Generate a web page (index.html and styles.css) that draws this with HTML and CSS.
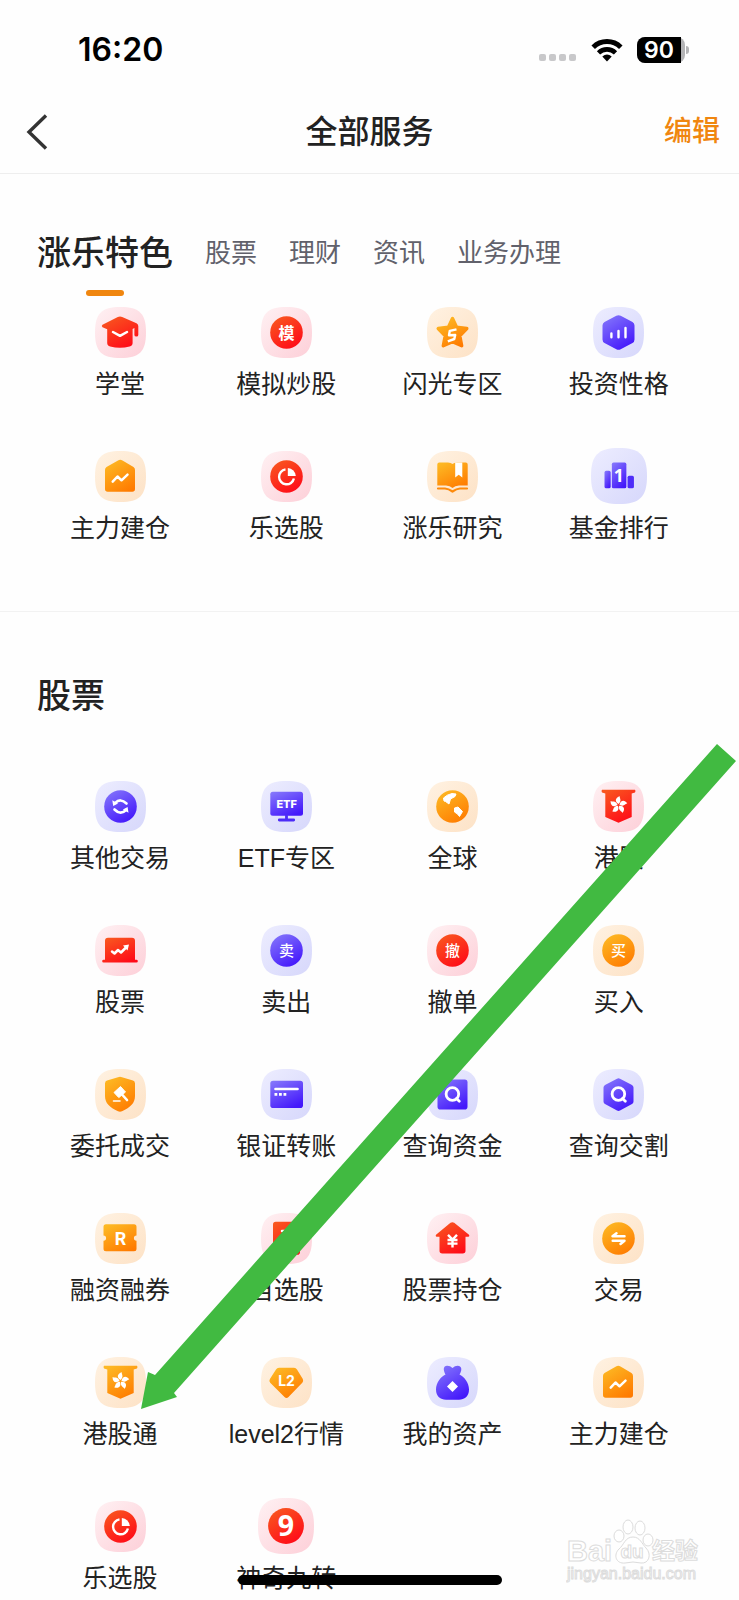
FILE: index.html
```html
<!DOCTYPE html>
<html lang="zh-CN">
<head>
<meta charset="utf-8">
<meta name="viewport" content="width=device-width, initial-scale=1">
<title>全部服务</title>
<link rel="stylesheet" href="styles.css">
</head>
<body>
<svg class="sprite" aria-hidden="true">
  <defs>
    <linearGradient id="bg-red" x1="0" y1="0" x2="1" y2="1"><stop offset="0" stop-color="#fff1f3"/><stop offset="1" stop-color="#fdcfd8"/></linearGradient>
    <linearGradient id="bg-gold" x1="0" y1="0" x2="1" y2="1"><stop offset="0" stop-color="#fff2e2"/><stop offset="1" stop-color="#fde2c6"/></linearGradient>
    <linearGradient id="bg-blue" x1="0" y1="0" x2="1" y2="1"><stop offset="0" stop-color="#ededff"/><stop offset="1" stop-color="#d6d7fb"/></linearGradient>
    <linearGradient id="red" x1="0.2" y1="0" x2="0.8" y2="1"><stop offset="0" stop-color="#f9561f"/><stop offset="1" stop-color="#ff0818"/></linearGradient>
    <linearGradient id="gold" x1="0.2" y1="0" x2="0.8" y2="1"><stop offset="0" stop-color="#fdb823"/><stop offset="1" stop-color="#ff7a00"/></linearGradient>
    <linearGradient id="blue" x1="0.1" y1="0" x2="0.7" y2="1"><stop offset="0" stop-color="#8577fb"/><stop offset="1" stop-color="#4418fb"/></linearGradient>
    <path id="tile" d="M25.500 0C44.500 0 51 6.500 51 25.500S44.500 51 25.500 51 0 44.500 0 25.500 6.500 0 25.500 0Z"/>
    <circle id="disc" cx="25.500" cy="25.500" r="16.300"/>
    <path id="house" d="M23 9.600Q25.200 8 27.500 9.600L38.500 16Q40 17 40 19V38Q40 40.700 37.300 40.700H12.700Q10 40.700 10 38V19Q10 17 11.500 16Z"/>
    <path id="zigzag" d="M17.700 30.700L22.500 25.500 26.500 29.300 32.500 23.700"/>
    <path id="banner" d="M9 8.700H42Q43 10 42 11.500L38.700 12.500V36L25.500 41.700 12.300 36V12.500L9 11.500Q8 10 9 8.700Z"/>
    <path id="petal" d="M0 -1C-4 -3.500 -3.400 -7.500 1.400 -8.800C.6 -7 4 -4.600 0 -1Z"/>
    <g id="flower"><use href="#petal"/><use href="#petal" transform="rotate(72)"/><use href="#petal" transform="rotate(144)"/><use href="#petal" transform="rotate(216)"/><use href="#petal" transform="rotate(288)"/></g>
    <g id="pie"><path d="M24.500 18.400A7.500 7.500 0 1 0 32.900 27.500" fill="none" stroke="#fff" stroke-width="2.400"/><path d="M26.800 17A8.300 8.300 0 0 1 34.800 25H26.800Z" fill="#fff"/></g>
    <g id="search" fill="none" stroke="#fff" stroke-linecap="round"><circle cx="25.400" cy="25" r="6.300" stroke-width="2.800"/><path d="M29.500 29.500L32.300 32.300" stroke-width="2.800"/></g>
  </defs>
</svg>

<div class="page">
  <div class="status">
    <time class="clock">16:20</time>
    <div class="signals">
      <svg class="dots" viewBox="0 0 38 8" fill="#c8c8ca"><rect width="7" height="7" rx="2"/><rect x="10" width="7" height="7" rx="2"/><rect x="20" width="7" height="7" rx="2"/><rect x="30" width="7" height="7" rx="2"/></svg>
      <svg class="wifi" viewBox="0 0 32 24"><path d="M2.200 9.200A19.700 19.700 0 0 1 29.800 9.200" fill="none" stroke="#000" stroke-width="5"/><path d="M7.500 14.800A12.200 12.200 0 0 1 24.500 14.800" fill="none" stroke="#000" stroke-width="4.600"/><path d="M11.300 18.600Q16 14.600 20.700 18.600L16 23.600Z"/></svg>
      <div class="battery"><span class="level">90</span></div>
    </div>
  </div>

  <header class="header">
    <button class="back" type="button" aria-label="返回"><svg viewBox="0 0 22 36"><path d="M20 1.500L3 18 20 34.500" fill="none" stroke="#333" stroke-width="3.400"/></svg></button>
    <h1 class="title">全部服务</h1>
    <button class="edit" type="button">编辑</button>
  </header>

  <main>
    <section class="featured">
      <nav class="tabs">
        <a class="tab tab-active" href="#featured">涨乐特色</a>
        <a class="tab" href="#stocks">股票</a>
        <a class="tab" href="#wealth">理财</a>
        <a class="tab" href="#news">资讯</a>
        <a class="tab" href="#business">业务办理</a>
      </nav>
      <div class="grid" id="featured">
        <a class="item" href="#"><span class="slot"><svg class="icon" viewBox="0 0 51 51"><use href="#tile" fill="url(#bg-red)"/><path d="M22.800 10Q25 8.800 27.200 10L41.500 16.300Q43.300 17.200 43.300 19V28Q43.300 29.600 41.400 29.600 39.400 29.600 39.400 28V21L37.600 22V36Q37.600 38.600 34.600 39.500 25 42 15.200 39.500 12.200 38.600 12.200 36V22.200L7.500 20.200Q6 19 7.500 17.700Z" fill="url(#red)"/><path d="M18 25L25 28.800 32 25" class="line"/></svg></span><span class="label">学堂</span></a>
        <a class="item" href="#"><span class="slot"><svg class="icon" viewBox="0 0 51 51"><use href="#tile" fill="url(#bg-red)"/><use href="#disc" fill="url(#red)"/><text class="glyph glyph-heavy" x="25.500" y="31.500">模</text></svg></span><span class="label">模拟炒股</span></a>
        <a class="item" href="#"><span class="slot"><svg class="icon" viewBox="0 0 51 51"><use href="#tile" fill="url(#bg-gold)"/><path d="M25.500 11.500L29.600 20.200 39.800 21.500 32.800 28.800 34.700 38.800 25.500 34.800 16.300 38.800 18.200 28.800 11.200 21.500 21.400 20.200Z" fill="url(#gold)" stroke="url(#gold)" stroke-width="3.400" stroke-linejoin="round"/><path d="M29.500 22.300L22.800 23.800 22 28.300 28.200 28 27.300 32 20.800 34.300" fill="none" stroke="#fff" stroke-width="2.400" stroke-linejoin="round"/></svg></span><span class="label">闪光专区</span></a>
        <a class="item" href="#"><span class="slot"><svg class="icon" viewBox="0 0 51 51"><use href="#tile" fill="url(#bg-blue)"/><path d="M23.300 8.800Q25.500 7.600 27.700 8.800L39.500 15Q41.500 16.200 41.500 18.500V32.500Q41.500 34.800 39.500 36L27.700 42.200Q25.500 43.400 23.300 42.200L11.500 36Q9.500 34.800 9.500 32.500V18.500Q9.500 16.200 11.500 15Z" fill="url(#blue)"/><path d="M18.400 26.500V30.300M25.500 24V30.300M32.500 21V30.300" stroke="#fff" stroke-width="2.400" stroke-linecap="round"/></svg></span><span class="label">投资性格</span></a>
        <a class="item" href="#"><span class="slot"><svg class="icon" viewBox="0 0 51 51"><use href="#tile" fill="url(#bg-gold)"/><use href="#house" fill="url(#gold)"/><use href="#zigzag" class="line"/></svg></span><span class="label">主力建仓</span></a>
        <a class="item" href="#"><span class="slot"><svg class="icon" viewBox="0 0 51 51"><use href="#tile" fill="url(#bg-red)"/><use href="#disc" fill="url(#red)"/><use href="#pie"/></svg></span><span class="label">乐选股</span></a>
        <a class="item" href="#"><span class="slot"><svg class="icon" viewBox="0 0 51 51"><use href="#tile" fill="url(#bg-gold)"/><path d="M12.300 11.500H21Q24 11.500 25.500 13 27 11.500 30 11.500H38.700Q40.700 11.500 40.700 13.500V34.500H32Q28 34.500 25.500 37 23 34.500 19 34.500H10.300V13.500Q10.300 11.500 12.300 11.500Z" fill="url(#gold)"/><path d="M28.200 11.500H35.300V26.500L31.700 23.800 28.200 26.500Z" fill="#fff"/><path d="M11 37.500H18Q21.500 37.700 25.500 40.500 29.500 37.700 33 37.500H40" fill="none" stroke="#fd8a0c" stroke-width="2.200" stroke-linecap="round"/></svg></span><span class="label">涨乐研究</span></a>
        <a class="item" href="#"><span class="slot"><svg class="icon icon-large" viewBox="0 0 51 51"><use href="#tile" fill="url(#bg-blue)"/><rect x="12.300" y="20.700" width="5.600" height="16" rx="1.500" fill="url(#blue)"/><rect x="19" y="13.200" width="13.200" height="23.500" rx="1.500" fill="url(#blue)"/><rect x="33.300" y="25.200" width="5.800" height="11.500" rx="1.500" fill="#4e2df8"/><text class="glyph glyph-one" x="25.300" y="31">1</text></svg></span><span class="label">基金排行</span></a>
      </div>
    </section>

    <section class="stocks" id="stocks">
      <h2 class="heading">股票</h2>
      <div class="grid">
        <a class="item" href="#"><span class="slot"><svg class="icon" viewBox="0 0 51 51"><use href="#tile" fill="url(#bg-blue)"/><use href="#disc" fill="url(#blue)"/><path d="M20 22.200Q25.500 16.500 31.500 22.500M31 29Q25.500 34.500 19.500 28.500" fill="none" stroke="#fff" stroke-width="2.600" stroke-linecap="round"/><path d="M17.300 19.300L18.200 25 23 22.600ZM33.500 31.700L32.600 26 27.900 28.500Z" fill="#fff"/></svg></span><span class="label">其他交易</span></a>
        <a class="item" href="#"><span class="slot"><svg class="icon" viewBox="0 0 51 51"><use href="#tile" fill="url(#bg-blue)"/><rect x="9.300" y="10.700" width="32.700" height="24" rx="2.500" fill="url(#blue)"/><path d="M25.500 34.500V39M18.300 39H32.700" stroke="#4d2cf7" stroke-width="2.800" stroke-linecap="round"/><text class="glyph glyph-small" x="25.700" y="27">ETF</text></svg></span><span class="label">ETF专区</span></a>
        <a class="item" href="#"><span class="slot"><svg class="icon" viewBox="0 0 51 51"><use href="#tile" fill="url(#bg-gold)"/><use href="#disc" fill="url(#gold)"/><path d="M16.500 17Q20 13.500 25 12.500L29 13 28 15.500 23.500 18 22 23 18.500 20.500 17 20ZM27.500 27L31 26 35.500 30.500 32.500 35.500 30.500 33 27.500 31Z" fill="#fff" stroke="#fff" stroke-linejoin="round"/></svg></span><span class="label">全球</span></a>
        <a class="item" href="#"><span class="slot"><svg class="icon" viewBox="0 0 51 51"><use href="#tile" fill="url(#bg-red)"/><use href="#banner" fill="url(#red)"/><use href="#flower" fill="#fff" transform="translate(25.500 24)"/></svg></span><span class="label">港股</span></a>
        <a class="item" href="#"><span class="slot"><svg class="icon" viewBox="0 0 51 51"><use href="#tile" fill="url(#bg-red)"/><path d="M13 12.700H37Q40 12.700 40 15.700V34.800H41.500Q42.800 34.800 42.800 36.200T41.500 37.600H8.500Q7.200 37.600 7.200 36.200T8.500 34.800H10V15.700Q10 12.700 13 12.700Z" fill="url(#red)"/><path d="M17 26.500L19.500 28.500 23 25 26 27.500 31 22.500" class="line"/><path d="M28 20.500L34 19.500 32.500 25.500Z" fill="#fff"/></svg></span><span class="label">股票</span></a>
        <a class="item" href="#"><span class="slot"><svg class="icon" viewBox="0 0 51 51"><use href="#tile" fill="url(#bg-blue)"/><use href="#disc" fill="url(#blue)"/><text class="glyph" x="25.500" y="30.800">卖</text></svg></span><span class="label">卖出</span></a>
        <a class="item" href="#"><span class="slot"><svg class="icon" viewBox="0 0 51 51"><use href="#tile" fill="url(#bg-red)"/><use href="#disc" fill="url(#red)"/><text class="glyph" x="25.500" y="30.800">撤</text></svg></span><span class="label">撤单</span></a>
        <a class="item" href="#"><span class="slot"><svg class="icon" viewBox="0 0 51 51"><use href="#tile" fill="url(#bg-gold)"/><use href="#disc" fill="url(#gold)"/><text class="glyph" x="25.500" y="30.800">买</text></svg></span><span class="label">买入</span></a>
        <a class="item" href="#"><span class="slot"><svg class="icon" viewBox="0 0 51 51"><use href="#tile" fill="url(#bg-gold)"/><path d="M23 8.300Q25 7.400 27 8.300L38 11.500Q40 12.200 40 14.500V27C40 34 35.500 38.500 27 42.200Q25 43.100 23 42.200C14.500 38.500 10 34 10 27V14.500Q10 12.200 12 11.500Z" fill="url(#gold)"/><path d="M19 23.500L25.500 17.500 30.500 23 23.800 28.600Z" fill="#fff" stroke="#fff" stroke-linejoin="round"/><path d="M27.500 26L32 31" stroke="#fff" stroke-width="2.600" stroke-linecap="round"/><path d="M18.500 32H25" stroke="#fff" stroke-width="1.600" stroke-linecap="round"/></svg></span><span class="label">委托成交</span></a>
        <a class="item" href="#"><span class="slot"><svg class="icon" viewBox="0 0 51 51"><use href="#tile" fill="url(#bg-blue)"/><rect x="9.300" y="11.700" width="32.700" height="27.300" rx="2.800" fill="url(#blue)"/><path d="M14.500 20H36.500" stroke="#fff" stroke-width="2.600" stroke-linecap="round"/><path d="M13.500 25.400H16.300M18 25.400H20.800M22.500 25.400H25.300" stroke="#fff" stroke-width="2.600"/></svg></span><span class="label">银证转账</span></a>
        <a class="item" href="#"><span class="slot"><svg class="icon" viewBox="0 0 51 51"><use href="#tile" fill="url(#bg-blue)"/><rect x="10.500" y="10.500" width="30" height="30" rx="2.800" fill="url(#blue)"/><use href="#search"/></svg></span><span class="label">查询资金</span></a>
        <a class="item" href="#"><span class="slot"><svg class="icon" viewBox="0 0 51 51"><use href="#tile" fill="url(#bg-blue)"/><path d="M24 9.700Q25.500 8.800 27 9.700L39 16Q40.500 17 40.500 18.500V32.500Q40.500 34 39 35L27 41.500Q25.500 42.400 24 41.500L12 35Q10.500 34 10.500 32.500V18.500Q10.500 17 12 16Z" fill="url(#blue)"/><use href="#search"/></svg></span><span class="label">查询交割</span></a>
        <a class="item" href="#"><span class="slot"><svg class="icon" viewBox="0 0 51 51"><use href="#tile" fill="url(#bg-gold)"/><path d="M11 11.200H39Q41.500 11.200 41.500 13.700V22.500A2.600 2.600 0 0 0 41.500 27.700V35.800Q41.500 38.300 39 38.300H11Q8.500 38.300 8.500 35.800V27.700A2.600 2.600 0 0 0 8.500 22.500V13.700Q8.500 11.200 11 11.200Z" fill="url(#gold)"/><text class="glyph glyph-latin" x="25.500" y="31.500">R</text></svg></span><span class="label">融资融券</span></a>
        <a class="item" href="#"><span class="slot"><svg class="icon" viewBox="0 0 51 51"><use href="#tile" fill="url(#bg-red)"/><rect x="12" y="8.700" width="27" height="33" rx="2.800" fill="url(#red)"/><path d="M21 18H30M21 25H30" class="line"/></svg></span><span class="label">自选股</span></a>
        <a class="item" href="#"><span class="slot"><svg class="icon" viewBox="0 0 51 51"><use href="#tile" fill="url(#bg-red)"/><path d="M23.500 9.800Q25.300 8.500 27.200 9.800L42 21.800Q43 23.500 41.500 23.800H38.500V37.800Q38.500 40.500 35.800 40.500H15.200Q12.500 40.500 12.500 37.800V23.800H9.500Q8 23.500 9 21.800Z" fill="url(#red)"/><path d="M21 21.800L25.500 26.500 30 21.800M20.500 27H30.500M20.500 30.600H30.500M25.500 26.500V34.500" fill="none" stroke="#fff" stroke-width="2.400"/></svg></span><span class="label">股票持仓</span></a>
        <a class="item" href="#"><span class="slot"><svg class="icon" viewBox="0 0 51 51"><use href="#tile" fill="url(#bg-gold)"/><use href="#disc" fill="url(#gold)"/><path d="M23.500 20.200L19.500 23.300H31.500M19.700 27.700H31.500L27.500 31" class="line"/></svg></span><span class="label">交易</span></a>
        <a class="item" href="#"><span class="slot"><svg class="icon" viewBox="0 0 51 51"><use href="#tile" fill="url(#bg-gold)"/><use href="#banner" fill="url(#gold)"/><use href="#flower" fill="#fff" transform="translate(25.500 24)"/></svg></span><span class="label">港股通</span></a>
        <a class="item" href="#"><span class="slot"><svg class="icon" viewBox="0 0 51 51"><use href="#tile" fill="url(#bg-gold)"/><path d="M18 10.800H33Q35 10.800 36 12.500L41.800 22Q42.800 24 41.300 25.800L27.500 40Q25.500 41.800 23.500 40L9.200 25.800Q7.700 24 8.900 22L15 12.500Q16 10.800 18 10.800Z" fill="url(#gold)"/><text class="glyph glyph-level" x="25.500" y="29.300">L2</text></svg></span><span class="label">level2行情</span></a>
        <a class="item" href="#"><span class="slot"><svg class="icon" viewBox="0 0 51 51"><use href="#tile" fill="url(#bg-blue)"/><path d="M20 8.700Q23 8.500 25.500 11 28 8.500 31 8.700 35 9.500 34.200 13.500 33.500 16 32.500 17.500C37 19.500 42 25.500 42 32.500 42 39.500 37.500 42.700 32 42.700H19C13.500 42.700 9 39.500 9 32.500 9 25.500 14 19.500 18.500 17.500 17.500 16 16.800 13.500 16.800 12.500 16.500 10 18 9 20 8.700Z" fill="url(#blue)"/><path d="M25.500 24L31 29.500 25.500 35 20 29.500Z" fill="#fff"/></svg></span><span class="label">我的资产</span></a>
        <a class="item" href="#"><span class="slot"><svg class="icon" viewBox="0 0 51 51"><use href="#tile" fill="url(#bg-gold)"/><use href="#house" fill="url(#gold)"/><use href="#zigzag" class="line"/></svg></span><span class="label">主力建仓</span></a>
        <a class="item" href="#"><span class="slot"><svg class="icon" viewBox="0 0 51 51"><use href="#tile" fill="url(#bg-red)"/><use href="#disc" fill="url(#red)"/><use href="#pie"/></svg></span><span class="label">乐选股</span></a>
        <a class="item" href="#"><span class="slot"><svg class="icon icon-large" viewBox="0 0 51 51"><use href="#tile" fill="url(#bg-red)"/><use href="#disc" fill="url(#red)"/><text class="glyph glyph-nine" x="25.500" y="34.500">9</text></svg></span><span class="label">神奇九转</span></a>
      </div>
    </section>
  </main>

  <svg class="arrow" viewBox="0 0 739 1600" aria-hidden="true"><path d="M717 744L736 761 174 1393 177 1397 141 1409 148 1372 155 1375Z" fill="#41ba41"/></svg>

  <svg class="watermark" viewBox="0 0 136 68" role="img" aria-label="Baidu 经验">
    <g fill="#fff" stroke="#dcdcdc" stroke-width="1">
      <text class="mark-name" x="1" y="45">Bai</text>
      <ellipse cx="53" cy="20" rx="5" ry="6"/><ellipse cx="62" cy="11" rx="5" ry="7"/><ellipse cx="74" cy="12" rx="5" ry="7"/><ellipse cx="82" cy="24" rx="5" ry="6"/>
      <path d="M67 21C74 21 76 28 80 32C86 38 83 48 75 47Q67 45 59 47C50 48 47 39 53 33C58 29 59 21 67 21Z"/>
      <text class="mark-du" x="66" y="42">du</text>
      <text class="mark-cjk" x="86" y="43">经验</text>
      <text class="mark-url" x="1" y="63">jingyan.baidu.com</text>
    </g>
  </svg>
  <div class="home-bar"></div>
</div>
</body>
</html>
```
FILE: styles.css
```css
* { box-sizing: border-box; }

body {
  margin: 0;
  background: #fefefe;
  color: #222;
  font-family: "Liberation Sans", "Noto Sans CJK SC", sans-serif;
}

a { color: inherit; text-decoration: none; }

button {
  padding: 0;
  border: 0;
  background: none;
  font: inherit;
}

svg { display: block; }

.sprite { position: absolute; width: 0; height: 0; }

.page { position: relative; min-height: 100vh; overflow: hidden; }

.status {
  display: flex;
  align-items: center;
  justify-content: space-between;
  height: 89px;
  padding: 10px 50px 0 78px;
}

.clock {
  color: #000;
  font: 600 32px/40px Inter, sans-serif;
}

.signals { display: flex; align-items: center; gap: 14px; }
.dots { width: 38px; height: 8px; margin-top: 16px; }
.wifi { width: 32px; height: 26px; }

.battery {
  position: relative;
  width: 48px;
  margin-right: 4px;
  border-radius: 8px;
  background: #b4b4b6;
}

.battery::after {
  content: "";
  position: absolute;
  top: 9px;
  right: -4px;
  width: 3px;
  height: 8px;
  border-radius: 0 3px 3px 0;
  background: #b4b4b6;
}

.level {
  display: block;
  width: 44px;
  border-radius: 8px 0 0 8px;
  background: #000;
  color: #fff;
  font: 600 23px/26px Inter, sans-serif;
  text-align: center;
}

.header {
  display: grid;
  grid-template-columns: 1fr auto 1fr;
  align-items: center;
  height: 85px;
  padding: 1px 19px 0;
  border-bottom: 1px solid #eee;
}

.back { justify-self: start; margin-left: 7px; }
.back svg { width: 22px; height: 36px; }

.title {
  margin: 0;
  font-size: 32px;
  font-weight: 500;
  line-height: 44px;
}

.edit {
  justify-self: end;
  color: #f0860f;
  font-size: 28px;
  font-weight: 500;
  line-height: 40px;
}

.featured {
  padding: 57px 37px 67px;
  border-bottom: 1px solid #f2f2f2;
}

.tabs {
  display: flex;
  align-items: flex-start;
  gap: 32px;
  margin-bottom: 8px;
}

.tab {
  color: #61616b;
  font-size: 26px;
  line-height: 44px;
}

.tab-active {
  display: flex;
  flex-direction: column;
  align-items: center;
  gap: 15px;
  color: #222;
  font-size: 34px;
  font-weight: 500;
}

.tab-active::after {
  content: "";
  width: 38px;
  height: 6px;
  border-radius: 3px;
  background: #f0860f;
}

.stocks { padding: 62px 37px 5px; }

.heading {
  margin: 0 0 60px;
  font-size: 34px;
  font-weight: 500;
  line-height: 44px;
}

.grid {
  display: grid;
  grid-template-columns: repeat(4, 1fr);
  row-gap: 48px;
}

.item {
  display: flex;
  flex-direction: column;
  align-items: center;
  gap: 8px;
}

.slot { display: grid; place-items: center; height: 56px; }
.icon { width: 51px; height: 51px; }
.icon-large { width: 56px; height: 56px; }

.label {
  font-size: 25px;
  line-height: 32px;
  white-space: nowrap;
}

.line {
  fill: none;
  stroke: #fff;
  stroke-width: 2.500px;
  stroke-linecap: round;
  stroke-linejoin: round;
}

.glyph {
  fill: #fff;
  font: 500 15px "Noto Sans CJK SC", sans-serif;
  text-anchor: middle;
}

.glyph-heavy { font-size: 16px; font-weight: 700; }
.glyph-latin { font: 700 18px Roboto, sans-serif; }
.glyph-one { font: 700 16px "Noto Sans", sans-serif; }
.glyph-small { font: 800 11px Inter, sans-serif; }
.glyph-level { font: 700 14px Inter, sans-serif; }
.glyph-nine { font: 700 26px "Noto Sans", sans-serif; }

.arrow {
  position: absolute;
  top: 0;
  left: 0;
  width: 100%;
  pointer-events: none;
}

.watermark {
  position: absolute;
  right: 37px;
  bottom: 16px;
  width: 136px;
}

.mark-name { font: 700 29px "Liberation Sans", sans-serif; }
.mark-du { font: 700 19px "Liberation Sans", sans-serif; text-anchor: middle; }
.mark-cjk { font: 700 23px "Noto Sans CJK SC", sans-serif; }
.mark-url { font: 400 16px "Liberation Sans", sans-serif; }

.home-bar {
  position: absolute;
  bottom: 15px;
  left: 50%;
  width: 264px;
  height: 10px;
  margin-left: -132px;
  border-radius: 5px;
  background: #000;
}
```
